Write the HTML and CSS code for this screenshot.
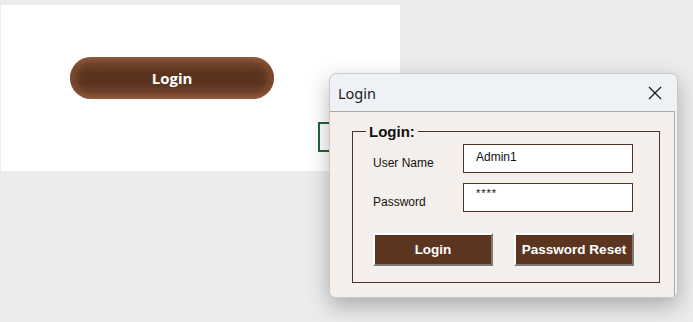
FILE: index.html
```html
<!DOCTYPE html>
<html lang="en">
<head>
    <meta charset="UTF-8">
    <title>Login</title>
    <link rel="stylesheet" href="styles.css">
</head>
<body>
    <div class="sheet">
        <button class="pill">Login</button>
        <div class="cell"></div>
    </div>

    <div class="dialog">
        <div class="title-bar">
            <span class="title">Login</span>
            <svg class="close" width="14" height="14" viewBox="0 0 14 14">
                <path d="M1 1 L13 13 M13 1 L1 13" stroke="#1a1a1a" stroke-width="1.3" fill="none"/>
            </svg>
        </div>
        <div class="dialog-body">
            <fieldset class="group">
                <legend>Login:</legend>
                <div class="row">
                    <label>User Name</label>
                    <div class="field">Admin1</div>
                </div>
                <div class="row">
                    <label>Password</label>
                    <div class="field pass">****</div>
                </div>
                <div class="actions">
                    <button class="btn">Login</button>
                    <button class="btn">Password Reset</button>
                </div>
            </fieldset>
        </div>
    </div>
</body>
</html>
```

FILE: styles.css
```css
body {
    margin: 0;
    background-color: #ececec;
    width: 693px;
    height: 322px;
    overflow: hidden;
    position: relative;
    font-family: "Liberation Sans", Arial, sans-serif;
}
.sheet {
    margin-top: 5px;
    margin-left: 1px;
    width: 399px;
    height: 166px;
    background-color: #fff;
    position: relative;
    padding-top: 52px;
    box-sizing: border-box;
}
.pill {
    display: block;
    margin-left: 69px;
    width: 204px;
    height: 42px;
    border: none;
    border-radius: 21px;
    background: linear-gradient(to bottom, #8d5a3b 0%, #6e4029 18%, #5a321f 40%, #5a321f 62%, #6e4029 82%, #8d5a3b 100%);
    box-shadow: inset 10px 0 10px -4px rgba(150, 95, 60, 0.6), inset -10px 0 10px -4px rgba(150, 95, 60, 0.6);
    color: #fff;
    font-family: "Open Sans", sans-serif;
    font-weight: 700;
    font-size: 15px;
    padding: 0;
}
.cell {
    position: absolute;
    left: 317px;
    top: 117px;
    width: 20px;
    height: 26px;
    border: 2px solid #21653f;
}
.dialog {
    position: absolute;
    left: 329px;
    top: 73px;
    width: 349px;
    height: 225px;
    background-color: #eef2f7;
    border: 1px solid #c8c8c8;
    border-radius: 7px;
    box-sizing: border-box;
    box-shadow: 0 8px 22px rgba(0, 0, 0, 0.28);
    display: flex;
    flex-direction: column;
    overflow: hidden;
}
.title-bar {
    height: 37px;
    display: flex;
    align-items: center;
    justify-content: space-between;
    padding: 0 15px 0 8px;
    flex-shrink: 0;
}
.title {
    font-family: "Noto Sans", sans-serif;
    font-size: 14.5px;
    color: #1a1a1a;
}
.dialog-body {
    flex: 1;
    margin: 0 2px 1px 0;
    background-color: #f5efeb;
    border-top: 1px solid #a9a9a9;
    border-right: 1px solid #a9a9a9;
    padding: 11px 14px 14px 22px;
}
.group {
    margin: 0;
    height: 160px;
    box-sizing: border-box;
    border: 1px solid #4e3326;
    padding: 0 0 0 20px;
}
.group legend {
    font-weight: 700;
    font-size: 15px;
    color: #111;
    padding: 0 3px;
    margin-left: -7px;
}
.row {
    display: flex;
    align-items: center;
    height: 29px;
    margin-bottom: 10px;
    font-size: 12px;
    color: #111;
}
.row:first-of-type {
    margin-top: 4px;
}
.row label {
    width: 90px;
    padding-top: 8px;
}
.field {
    width: 170px;
    height: 29px;
    box-sizing: border-box;
    background-color: #fff;
    border: 1px solid #4e3326;
    padding: 5px 12px;
    font-size: 12px;
    align-self: flex-start;
}
.field.pass {
    font-size: 11px;
    letter-spacing: 1px;
    padding-top: 3px;
}
.actions {
    display: flex;
    gap: 21px;
    margin-top: 21px;
}
.btn {
    width: 120px;
    height: 33px;
    background-color: #5b3520;
    color: #fff;
    font-family: "Liberation Sans", Arial, sans-serif;
    font-weight: 700;
    font-size: 13.5px;
    border-style: solid;
    border-width: 2px;
    border-color: #fff #7a7a7a #7a7a7a #fff;
    padding: 0;
}
```
